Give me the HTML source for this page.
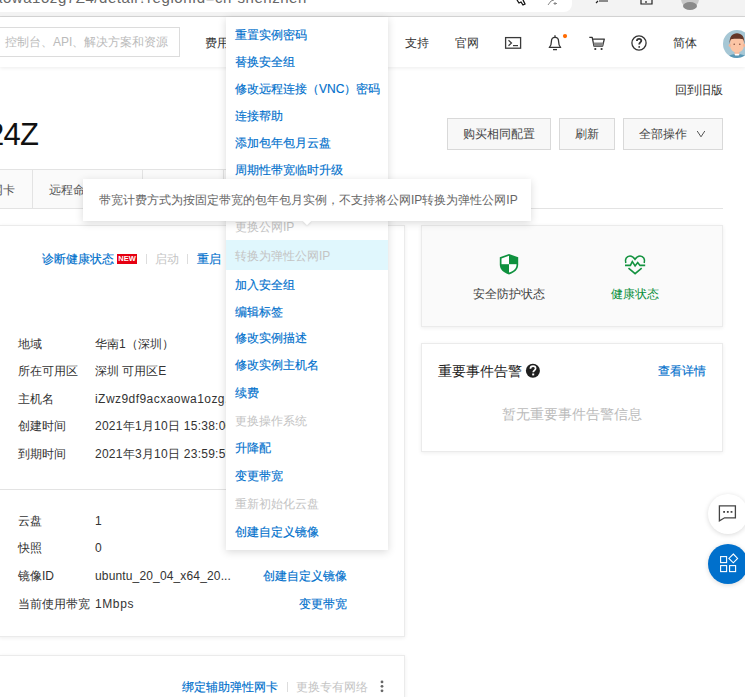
<!DOCTYPE html>
<html><head><meta charset="utf-8">
<style>
*{box-sizing:border-box;margin:0;padding:0}
html,body{width:745px;height:697px;overflow:hidden;background:#fff;font-family:"Liberation Sans",sans-serif;font-size:12px;color:#333}
.a{position:absolute;white-space:nowrap;line-height:20px}
.b{color:#0070cc;-webkit-text-stroke:0.15px currentColor}
.g{color:#c4c4c4}
.f14{font-size:14px}
</style></head><body>

<!-- browser chrome -->
<div class="a" style="left:0;top:0;width:745px;height:16px;background:#f3f3f3"></div>
<div class="a" style="left:0;top:0;width:572px;height:12px;background:#fff;border-radius:0 0 8px 0"></div>
<div class="a" style="left:0;top:16px;width:745px;height:1px;background:#d6d6d6"></div>
<div class="a" style="left:-6px;top:-11px;font-size:15px;line-height:18px;letter-spacing:0.55px;color:#666;-webkit-text-stroke:0">aowa1ozg7Z4/detail?regionId=cn-shenzhen</div>

<!-- header -->
<div class="a" style="left:0;top:17px;width:745px;height:50px;background:#fff;box-shadow:0 1px 4px rgba(0,0,0,0.08)"></div>
<div class="a" style="left:-1px;top:27px;width:181px;height:30px;border:1px solid #dcdcdc"></div>
<div class="a" style="left:5px;top:32px;color:#bbb">控制台、API、解决方案和资源</div>
<div class="a" style="left:205px;top:33px">费用</div>
<div class="a" style="left:405px;top:33px">支持</div>
<div class="a" style="left:455px;top:33px">官网</div>
<div class="a" style="left:673px;top:33px">简体</div>


<!-- header icons -->
<svg class="a" style="left:0;top:0" width="745" height="697" viewBox="0 0 745 697">
 <!-- browser toolbar icons -->
 <path d="M517 0 L519 3 L521 2 L523 5 L525 4 L523 0" fill="none" stroke="#111" stroke-width="1.3"/>
 <path d="M548 5 L551 1 M551 1 L554 0 M555 2 V5 M553.5 3.5 H557" fill="none" stroke="#888" stroke-width="1"/>
 <path d="M596 3 L598 1 M599 1 H608" fill="none" stroke="#222" stroke-width="1.2"/>
 <path d="M641 0 V4 H652 V0 M646 1 V3" fill="none" stroke="#222" stroke-width="1.2"/>
 <circle cx="690" cy="-1" r="9" fill="#c9c9c9"/>
 <ellipse cx="690" cy="6" rx="7" ry="4" fill="#8a8a8a"/>
 <!-- terminal -->
 <rect x="505.6" y="37.6" width="15" height="10.6" fill="none" stroke="#3a3a3a" stroke-width="1.3"/>
 <path d="M508.5 40.2 L511.5 43 L508.5 45.8" fill="none" stroke="#3a3a3a" stroke-width="1.2"/>
 <path d="M513 45.6 H518" fill="none" stroke="#3a3a3a" stroke-width="1.2"/>
 <!-- bell -->
 <path d="M555 35.3 V37.2" stroke="#333" stroke-width="1.3"/>
 <path d="M549.3 47.4 C551 46 551.4 44 551.4 41.5 C551.4 39 553 37.4 555 37.4 C557 37.4 558.6 39 558.6 41.5 C558.6 44 559 46 560.7 47.4 Z" fill="none" stroke="#333" stroke-width="1.3" stroke-linejoin="round"/>
 <path d="M553 49.6 H557" stroke="#333" stroke-width="1.3"/>
 <circle cx="565" cy="36.1" r="2.1" fill="#ff6a00"/>
 <!-- cart -->
 <path d="M589.3 37.3 H592.2 L594 46.2 H602.6 L604.3 39.2 H592.8" fill="none" stroke="#333" stroke-width="1.3" stroke-linejoin="round"/>
 <path d="M593.4 42.6 H603.4 L602.5 46 H594.2 Z" fill="#888"/>
 <circle cx="595.3" cy="49" r="1.1" fill="#333"/>
 <circle cx="601.6" cy="49" r="1.1" fill="#333"/>
 <!-- help -->
 <circle cx="639" cy="43" r="7.1" fill="none" stroke="#333" stroke-width="1.3"/>
 <path d="M636.9 41.1 C636.9 39.7 637.9 38.8 639.1 38.8 C640.4 38.8 641.3 39.6 641.3 40.8 C641.3 42.3 639.2 42.6 639.2 44.5" fill="none" stroke="#333" stroke-width="1.8"/>
 <circle cx="639.2" cy="46.9" r="0.9" fill="#333"/>
 <!-- avatar -->
 <clipPath id="av"><circle cx="737" cy="44" r="14"/></clipPath>
 <g clip-path="url(#av)">
  <rect x="723" y="30" width="28" height="28" fill="#a6c7d5"/>
  <path d="M726 60 C727 55.5 731 54 737 54 C743 54 747 55.5 748 60 Z" fill="#5a98b6"/>
  <rect x="734.6" y="49" width="4.8" height="6" fill="#f5b596"/>
  <path d="M734.6 53.8 H739.4 L738.8 55.6 H735.2 Z" fill="#fff"/>
  <path d="M730.2 41 C730.2 38 733 36.5 737 36.5 C741 36.5 743.8 38 743.8 41 V46 C743.8 50 740.5 52.5 737 52.5 C733.5 52.5 730.2 50 730.2 46 Z" fill="#fcc5a5"/>
  <ellipse cx="729.9" cy="45.3" rx="1.2" ry="1.6" fill="#f5b596"/>
  <ellipse cx="744.1" cy="45.3" rx="1.2" ry="1.6" fill="#f5b596"/>
  <path d="M729.6 44 C729.2 36.5 732.5 33.2 737 33.2 C741.5 33.2 744.8 36.5 744.4 44 C744 41.5 743.6 40 743 39.3 C741 38.8 738.5 38.7 737 38.7 C735.5 38.7 733 38.8 731 39.3 C730.4 40 730 41.5 729.6 44 Z" fill="#633628"/>
  <circle cx="734.2" cy="44.2" r="0.75" fill="#7a4a3a"/>
  <circle cx="739.8" cy="44.2" r="0.75" fill="#7a4a3a"/>
 </g>
</svg>

<!-- page -->
<div class="a" style="left:675px;top:80px">回到旧版</div>
<div class="a" style="left:-13px;top:114.5px;font-size:31px;line-height:40px;letter-spacing:-0.8px;color:#111;-webkit-text-stroke:0">24Z</div>

<div class="a" style="left:447px;top:118px;width:104px;height:32px;border:1px solid #d9d9d9;background:#f8f8f8"></div>
<div class="a" style="left:463px;top:124px;color:#444">购买相同配置</div>
<div class="a" style="left:559px;top:118px;width:56px;height:32px;border:1px solid #d9d9d9;background:#f8f8f8"></div>
<div class="a" style="left:575px;top:124px;color:#444">刷新</div>
<div class="a" style="left:623px;top:118px;width:100px;height:32px;border:1px solid #d9d9d9;background:#f8f8f8"></div>
<div class="a" style="left:639px;top:124px;color:#444">全部操作</div>

<!-- tabs -->
<div class="a" style="left:-1px;top:169px;width:305px;height:40px;border:1px solid #e3e3e3;background:#fafafa"></div>
<div class="a" style="left:32px;top:169px;width:1px;height:40px;background:#e3e3e3"></div>
<div class="a" style="left:142px;top:169px;width:1px;height:40px;background:#e3e3e3"></div>
<div class="a" style="left:223px;top:169px;width:1px;height:40px;background:#e3e3e3"></div>
<div class="a" style="left:304px;top:208px;width:419px;height:1px;background:#e3e3e3"></div>
<div class="a" style="left:-33px;top:180px;color:#555">弹性网卡</div>
<div class="a" style="left:49px;top:180px;color:#555">远程命令</div>

<!-- left card -->
<div class="a" style="left:-1px;top:225px;width:406px;height:412px;border:1px solid #ebebeb;background:#fff;box-shadow:0 1px 4px rgba(0,0,0,0.07)"></div>
<div class="a b" style="left:42px;top:249px">诊断健康状态</div>
<div class="a" style="left:117px;top:253.5px;width:20px;height:10px;background:#e60012"></div>
<div class="a" style="left:117px;top:253.5px;width:20px;height:10px;line-height:10px;font-size:7.5px;font-weight:bold;color:#fff;text-align:center;-webkit-text-stroke:0">NEW</div>
<div class="a" style="left:146px;top:254px;width:1px;height:10px;background:#ddd"></div>
<div class="a g" style="left:155px;top:249px">启动</div>
<div class="a" style="left:187px;top:254px;width:1px;height:10px;background:#ddd"></div>
<div class="a b" style="left:197px;top:249px">重启</div>

<div class="a" style="left:18px;top:334px;color:#333">地域</div>
<div class="a" style="left:95px;top:334px">华南1（深圳）</div>
<div class="a" style="left:18px;top:361px;color:#333">所在可用区</div>
<div class="a" style="left:95px;top:361px">深圳 可用区E</div>
<div class="a" style="left:18px;top:389px;color:#333">主机名</div>
<div class="a" style="left:95px;top:389px;letter-spacing:0.45px">iZwz9df9acxaowa1ozg...</div>
<div class="a" style="left:18px;top:416px;color:#333">创建时间</div>
<div class="a" style="left:95px;top:416px;letter-spacing:0.25px">2021年1月10日 15:38:00</div>
<div class="a" style="left:18px;top:444px;color:#333">到期时间</div>
<div class="a" style="left:95px;top:444px;letter-spacing:0.25px">2021年3月10日 23:59:59</div>

<div class="a" style="left:0;top:489px;width:388px;height:1px;background:#e3e3e3"></div>

<div class="a" style="left:18px;top:511px;color:#333">云盘</div>
<div class="a" style="left:95px;top:511px">1</div>
<div class="a" style="left:18px;top:538px;color:#333">快照</div>
<div class="a" style="left:95px;top:538px">0</div>
<div class="a" style="left:18px;top:566px;color:#333">镜像ID</div>
<div class="a" style="left:95px;top:566px;letter-spacing:0.15px">ubuntu_20_04_x64_20...</div>
<div class="a b" style="left:263px;top:566px">创建自定义镜像</div>
<div class="a" style="left:18px;top:594px;color:#333">当前使用带宽</div>
<div class="a" style="left:95px;top:594px;letter-spacing:0.6px">1Mbps</div>
<div class="a b" style="left:299px;top:594px">变更带宽</div>

<!-- bottom card -->
<div class="a" style="left:-1px;top:655px;width:406px;height:60px;border:1px solid #ebebeb;background:#fff;box-shadow:0 1px 4px rgba(0,0,0,0.07)"></div>
<div class="a b" style="left:182px;top:677px">绑定辅助弹性网卡</div>
<div class="a" style="left:287px;top:682px;width:1px;height:10px;background:#ddd"></div>
<div class="a g" style="left:296px;top:677px">更换专有网络</div>

<!-- right cards -->
<div class="a" style="left:421px;top:225px;width:302px;height:102px;border:1px solid #ebebeb;background:#fafafa;box-shadow:0 1px 4px rgba(0,0,0,0.07)"></div>
<div class="a" style="left:473px;top:284px;color:#444">安全防护状态</div>
<div class="a" style="left:611px;top:284px;color:#0a8f3c">健康状态</div>

<div class="a" style="left:421px;top:343px;width:302px;height:109px;border:1px solid #ebebeb;background:#fff;box-shadow:0 1px 4px rgba(0,0,0,0.07)"></div>
<div class="a f14" style="left:438px;top:361px;color:#222">重要事件告警</div>
<div class="a b" style="left:658px;top:361px">查看详情</div>
<div class="a f14" style="left:502px;top:404px;color:#bbb">暂无重要事件告警信息</div>

<svg class="a" style="left:0;top:0" width="745" height="697" viewBox="0 0 745 697">
 <!-- chevron -->
 <path d="M697.2 131 L701 136.8 L704.8 131" fill="none" stroke="#555" stroke-width="1"/>
 <!-- shield -->
 <clipPath id="shin"><path d="M509 255.8 L516.5 258.6 V264.5 C516.5 268.6 513.6 271 509 272.6 C504.4 271 501.5 268.6 501.5 264.5 V258.6 Z"/></clipPath>
 <path d="M509 254 L518.2 257.3 V264.5 C518.2 269.6 514.6 272.5 509 274.4 C503.4 272.5 499.8 269.6 499.8 264.5 V257.3 Z" fill="#0f913e"/>
 <g clip-path="url(#shin)">
  <rect x="500" y="254" width="9" height="10.2" fill="#fff"/>
  <rect x="509" y="264.2" width="9" height="10.2" fill="#fff"/>
 </g>
 <!-- heart -->
 <path d="M625.8 263 C624.6 259.5 626.5 256 630 256 C632.3 256 633.8 257.6 635 259.4 C636.2 257.6 637.7 256 640 256 C643.5 256 645.4 259.5 644.2 263" fill="none" stroke="#13923f" stroke-width="1.6"/>
 <path d="M625 265.4 H630.4 L632.3 261.6 L635.1 265.9 L637.7 262.5 L640 265.4 H645.2" fill="none" stroke="#13923f" stroke-width="1.6" stroke-linejoin="miter"/>
 <path d="M628.5 268.1 L635.1 273.6 L641.7 268.1" fill="none" stroke="#13923f" stroke-width="1.6"/>
 <!-- ? icon -->
 <circle cx="532.9" cy="370.7" r="7" fill="#1f1f1f"/>
 <path d="M530.4 368.8 C530.4 367.2 531.5 366.2 533 366.2 C534.5 366.2 535.6 367.1 535.6 368.5 C535.6 370.2 533.2 370.4 533.2 372.3" fill="none" stroke="#fff" stroke-width="1.7"/>
 <rect x="532.2" y="373.5" width="2" height="1.9" fill="#fff"/>
 <!-- kebab -->
 <circle cx="382" cy="681.9" r="1.4" fill="#666"/>
 <circle cx="382" cy="686.3" r="1.4" fill="#666"/>
 <circle cx="382" cy="690.8" r="1.4" fill="#666"/>
</svg>
<!-- floats -->
<div class="a" style="left:708px;top:494px;width:40px;height:40px;border-radius:50%;background:#fff;box-shadow:0 1px 5px rgba(0,0,0,0.15)"></div>
<div class="a" style="left:708px;top:544px;width:40px;height:40px;border-radius:50%;background:#0070cc;box-shadow:0 1px 5px rgba(0,0,0,0.15)"></div>


<svg class="a" style="left:700px;top:490px" width="45" height="100" viewBox="700 490 45 100">
 <path d="M719.4 520.8 V505.8 H735.4 V517.8 H724.6 Z" fill="none" stroke="#444" stroke-width="1.3" stroke-linejoin="miter"/>
 <rect x="723.2" y="511" width="1.8" height="1.8" fill="#444"/>
 <rect x="726.9" y="511" width="1.8" height="1.8" fill="#444"/>
 <rect x="730.6" y="511" width="1.8" height="1.8" fill="#444"/>
 <g fill="none" stroke="#fff" stroke-width="1.1">
  <rect x="720.6" y="556.6" width="6" height="6"/>
  <rect x="720.6" y="565.6" width="6" height="6"/>
  <rect x="729.6" y="565.6" width="6" height="6"/>
  <path d="M733.3 554 L737.6 558.4 L733.3 562.8 L728.9 558.4 Z"/>
 </g>
</svg>

<!-- menu -->
<div class="a" style="left:226px;top:17px;width:162px;height:533px;background:#fff;box-shadow:0 2px 8px rgba(0,0,0,0.15)"></div>
<div class="a" style="left:226px;top:240px;width:162px;height:30px;background:#e0f7fd"></div>
<div class="a b" style="left:235px;top:25px">重置实例密码</div>
<div class="a b" style="left:235px;top:52px">替换安全组</div>
<div class="a b" style="left:235px;top:79px">修改远程连接（VNC）密码</div>
<div class="a b" style="left:235px;top:106px">连接帮助</div>
<div class="a b" style="left:235px;top:133px">添加包年包月云盘</div>
<div class="a b" style="left:235px;top:160px">周期性带宽临时升级</div>
<div class="a g" style="left:235px;top:188px">更换专有网络</div>
<div class="a g" style="left:235px;top:217px">更换公网IP</div>
<div class="a g" style="left:235px;top:246px">转换为弹性公网IP</div>
<div class="a b" style="left:235px;top:275px">加入安全组</div>
<div class="a b" style="left:235px;top:302px">编辑标签</div>
<div class="a b" style="left:235px;top:328px">修改实例描述</div>
<div class="a b" style="left:235px;top:355px">修改实例主机名</div>
<div class="a b" style="left:235px;top:383px">续费</div>
<div class="a g" style="left:235px;top:411px">更换操作系统</div>
<div class="a b" style="left:235px;top:438px">升降配</div>
<div class="a b" style="left:235px;top:466px">变更带宽</div>
<div class="a g" style="left:235px;top:494px">重新初始化云盘</div>
<div class="a b" style="left:235px;top:522px">创建自定义镜像</div>

<!-- tooltip -->
<div class="a" style="left:83px;top:179px;width:448px;height:42px;background:#fff;box-shadow:0 2px 8px rgba(0,0,0,0.15)"></div>
<div class="a" style="left:304px;top:218px;width:6px;height:6px;background:#fff;transform:rotate(45deg);box-shadow:1px 1px 2px rgba(0,0,0,0.08)"></div>
<div class="a" style="left:83px;top:179px;width:448px;height:42px;background:#fff"></div>
<div class="a" style="left:99px;top:190px;color:#666">带宽计费方式为按固定带宽的包年包月实例，不支持将公网IP转换为弹性公网IP</div>

</body></html>
